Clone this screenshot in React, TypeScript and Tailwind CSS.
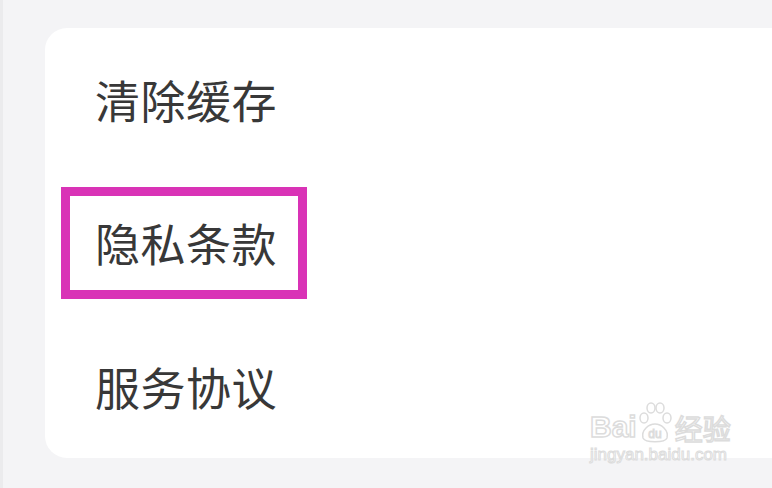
import React from "react";

const rows = ["清除缓存", "隐私条款", "服务协议"];

function Watermark() {
  return (
    <div className="absolute left-[590px] top-[400px] flex flex-col items-start select-none">
      <div className="flex items-end">
        <span className="text-[30px] leading-none font-bold text-white [-webkit-text-stroke:1.5px_#dcdcdc] [font-family:'Liberation_Sans',Arial,sans-serif]">
          Bai
        </span>
        <svg width="36" height="44" viewBox="0 0 36 44" className="-mb-[2px]">
          <g fill="white" stroke="#dcdcdc" strokeWidth="1.5">
            <ellipse cx="7" cy="18" rx="4" ry="5" />
            <ellipse cx="14" cy="8" rx="4" ry="5" />
            <ellipse cx="23" cy="8" rx="4" ry="5" />
            <ellipse cx="30" cy="18" rx="4" ry="5" />
            <path d="M6 38 C4 30 12 24 18 24 C24 24 32 30 30 38 C28 43 8 43 6 38 Z" />
          </g>
          <text x="18" y="38" textAnchor="middle" fontSize="12" fontFamily="Liberation Sans, Arial, sans-serif" fill="white" stroke="#dcdcdc" strokeWidth="1">du</text>
        </svg>
        <span className="text-[28px] leading-none text-white [-webkit-text-stroke:1.5px_#dcdcdc] [font-family:'Noto_Sans_CJK_SC',sans-serif] ml-[2px]">
          经验
        </span>
      </div>
      <span className="mt-[4px] text-[17px] leading-none text-white [-webkit-text-stroke:1px_#dcdcdc] [font-family:'Liberation_Sans',Arial,sans-serif]">
        jingyan.baidu.com
      </span>
    </div>
  );
}

export default function App() {
  return (
    <div className="relative w-[772px] h-[488px] overflow-hidden bg-[#f4f4f6] [font-family:'Noto_Sans_CJK_SC','Noto_Sans',sans-serif]">
      <div className="absolute left-0 top-0 h-full w-[3px] bg-[#ebebed]" />
      <div className="pt-[28px] pl-[45px]">
        <div className="relative w-[760px] rounded-[22px] bg-white flex flex-col">
          {rows.map((t) => (
            <div key={t} className="h-[143.3px] flex items-center pl-[50px]">
              <span className="text-[45px] leading-none text-[#383838] tracking-[0.5px]">{t}</span>
            </div>
          ))}
          <div className="absolute left-[16px] top-[159px] w-[246px] h-[112px] border-[9px] border-[#d933b6]" />
        </div>
      </div>
      <Watermark />
    </div>
  );
}
